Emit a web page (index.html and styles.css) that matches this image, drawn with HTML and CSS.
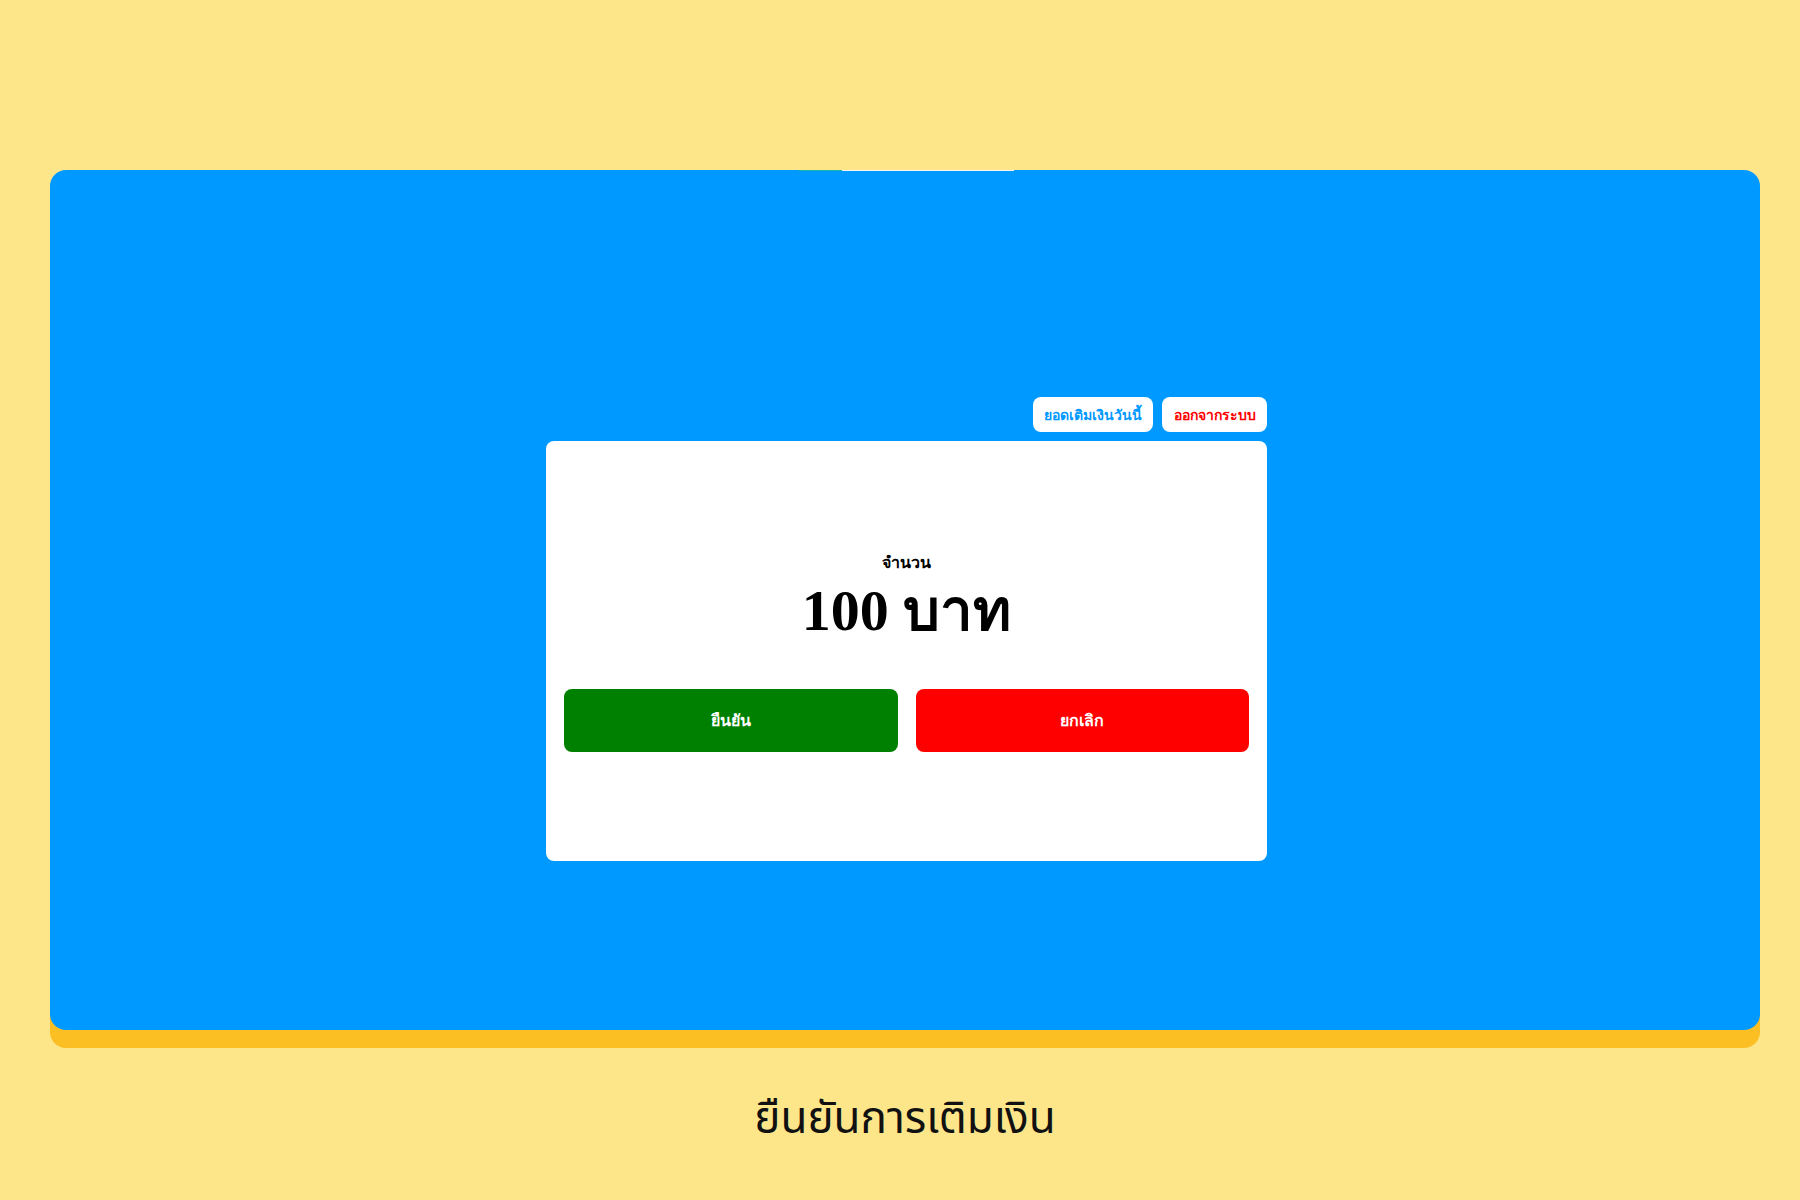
FILE: index.html
```html
<!DOCTYPE html>
<html lang="th">
<head>
<meta charset="utf-8">
<title>ยืนยันการเติมเงิน</title>
<link rel="stylesheet" href="styles.css">
</head>
<body>
<div class="page">
  <div class="panel">
    <div class="sliver"><span class="sliver-teal"></span><span class="sliver-white"></span></div>
    <div class="stack">
      <div class="topbar">
        <button class="pill pill-blue">ยอดเติมเงินวันนี้</button>
        <button class="pill pill-red">ออกจากระบบ</button>
      </div>
      <div class="card">
        <div class="label">จำนวน</div>
        <div class="amount">100 บาท</div>
        <div class="actions">
          <button class="btn btn-green">ยืนยัน</button>
          <button class="btn btn-red">ยกเลิก</button>
        </div>
      </div>
    </div>
  </div>
  <div class="caption">ยืนยันการเติมเงิน</div>
</div>
</body>
</html>
```
FILE: styles.css
```css
html, body {
  margin: 0;
  padding: 0;
  background: #fde68a;
}
body {
  width: 1800px;
  height: 1200px;
  overflow: hidden;
  font-family: "Liberation Serif", serif;
}
.page {
  padding: 170px 40px 0 50px;
}
.panel {
  position: relative;
  width: 1710px;
  height: 860px;
  background: #0099ff;
  border-radius: 16px;
  box-shadow: 0 18px 0 #fbbf24;
  box-sizing: border-box;
  padding-top: 227px;
}
.sliver {
  position: absolute;
  top: 0;
  left: 749px;
  display: flex;
  height: 1px;
}
.sliver-teal {
  width: 43px;
  background: #14b8a6;
}
.sliver-white {
  width: 172px;
  background: #f3f4f6;
}
.stack {
  width: 721px;
  margin: 0 0 0 496px;
  display: flex;
  flex-direction: column;
  gap: 9px;
}
.topbar {
  display: flex;
  justify-content: flex-end;
  gap: 9px;
}
.pill {
  height: 35px;
  padding: 0 10px;
  border: none;
  border-radius: 8px;
  background: #ffffff;
  font-family: "Liberation Serif", serif;
  font-size: 14px;
  font-weight: 700;
}
.pill-blue { color: #0099ff; width: 120px; }
.pill-red { color: #ff0000; width: 105px; }
.card {
  height: 420px;
  background: #ffffff;
  border-radius: 8px;
  display: flex;
  flex-direction: column;
  align-items: center;
  justify-content: center;
  padding: 0 18px;
  box-sizing: border-box;
}
.label {
  font-size: 16px;
  font-weight: 700;
  color: #000;
}
.amount {
  font-size: 58px;
  font-weight: 700;
  color: #000;
  line-height: 1.1;
  margin-top: 4px;
}
.actions {
  width: 100%;
  display: flex;
  gap: 18px;
  margin-top: 46px;
}
.btn {
  flex: 1;
  height: 63px;
  border: none;
  border-radius: 8px;
  color: #ffffff;
  font-family: "Liberation Serif", serif;
  font-size: 16px;
  font-weight: 700;
}
.btn-green { background: #008000; }
.btn-red { background: #ff0000; }
.caption {
  margin-top: 56px;
  text-align: center;
  font-family: "Noto Sans Thai", "Noto Sans", sans-serif;
  font-size: 44px;
  color: #111111;
}
```
